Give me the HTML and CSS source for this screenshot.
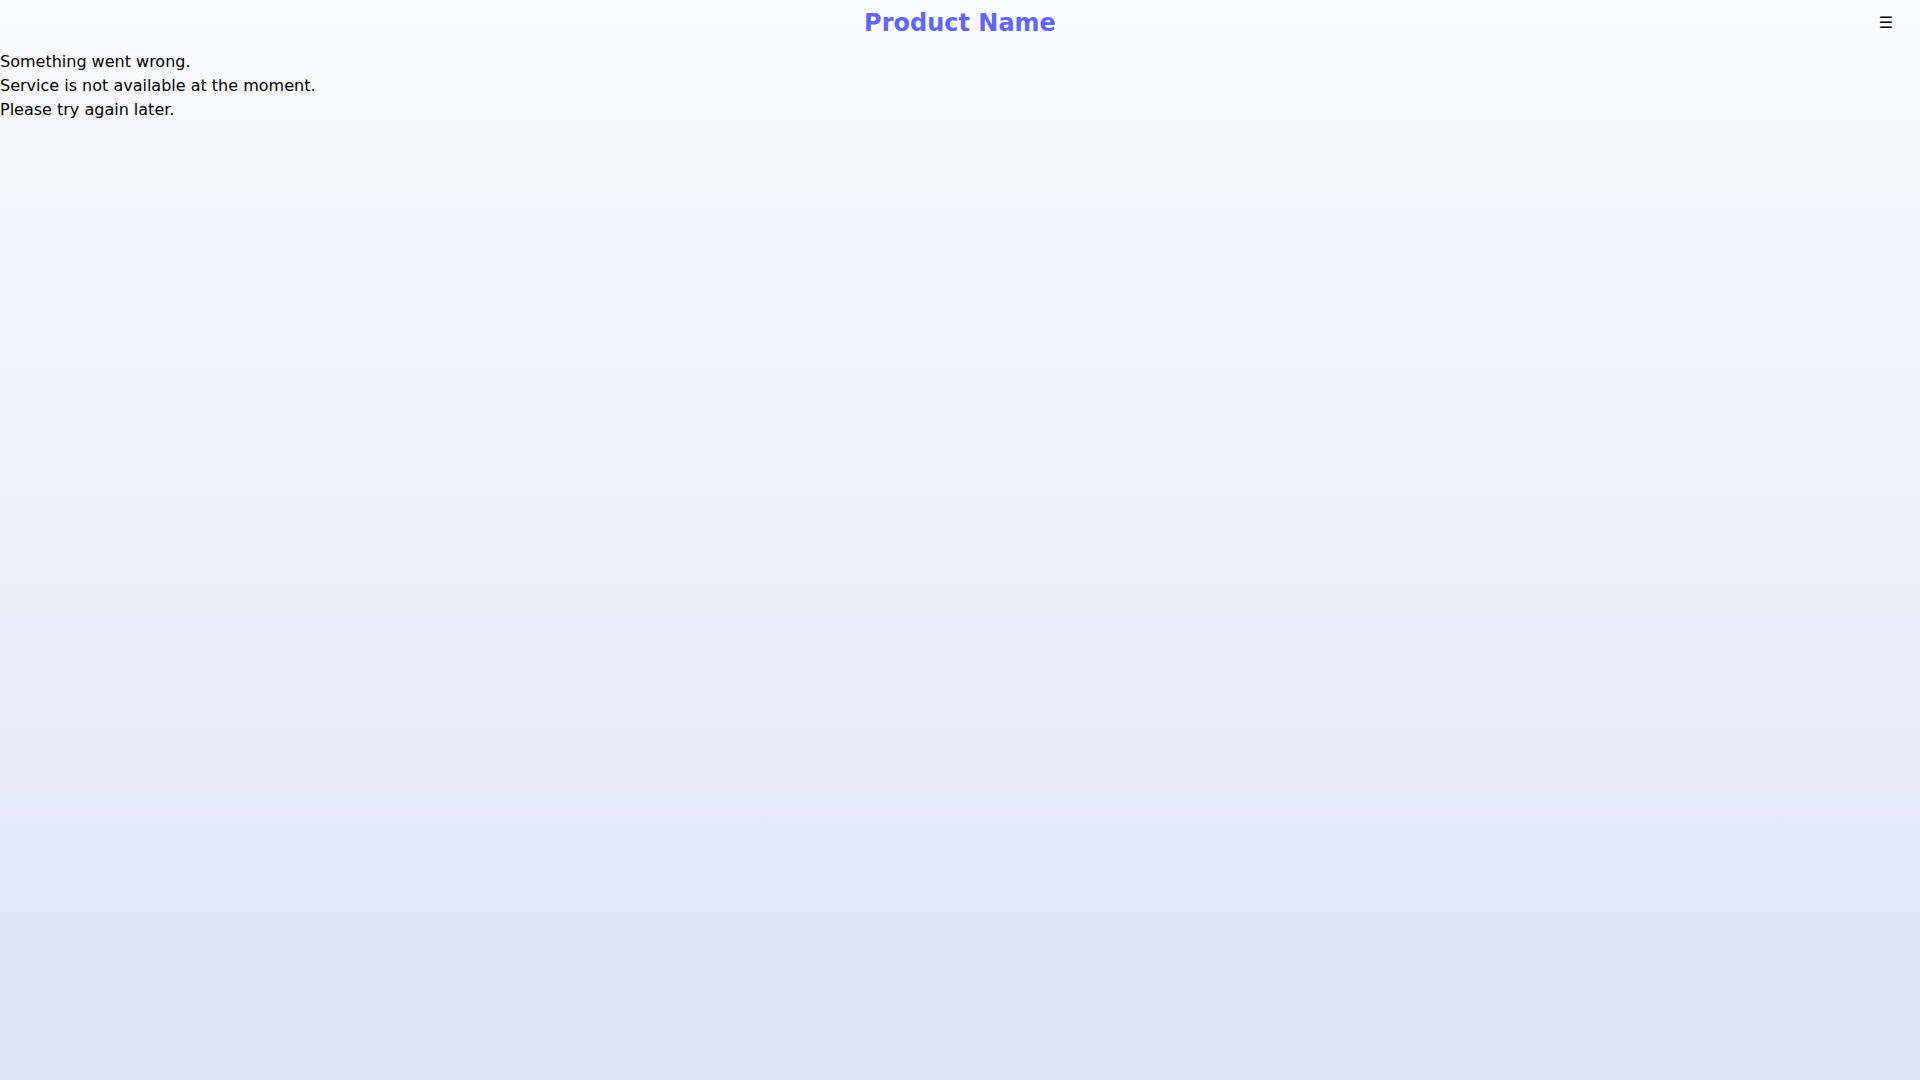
FILE: index.html
```html
<!DOCTYPE html>
<html lang="en">
<head>
<meta charset="utf-8">
<title>Product Name</title>
<link rel="stylesheet" href="styles.css">
</head>
<body>
<div class="page">
  <header class="topbar">
    <div class="spacer"></div>
    <h1 class="brand">Product Name</h1>
    <div class="menu-wrap"><button class="menu" type="button" aria-label="Menu">☰</button></div>
  </header>
  <main class="message">
    <p>Something went wrong.</p>
    <p>Service is not available at the moment.</p>
    <p>Please try again later.</p>
  </main>
</div>
</body>
</html>
```
FILE: styles.css
```css
html, body {
  margin: 0;
  padding: 0;
  height: 100%;
}
body {
  font-family: "DejaVu Sans", sans-serif;
  font-size: 16px;
  line-height: 24px;
  color: #000;
}
.page {
  min-height: 100vh;
  background: linear-gradient(to bottom, #f9fafb 0%, #e0e3f8 100%);
}
.topbar {
  display: flex;
  align-items: center;
  height: 46px;
  padding: 0 16px;
  margin-bottom: 4px;
}
.spacer, .menu-wrap {
  flex: 1;
}
.menu-wrap {
  display: flex;
  justify-content: flex-end;
}
.brand {
  margin: 0;
  font-size: 24px;
  line-height: 28px;
  font-weight: 700;
  color: #6366f1;
}
.menu {
  background: none;
  border: none;
  padding: 0;
  margin-right: 11px;
  font-family: "DejaVu Sans", sans-serif;
  font-size: 16px;
  line-height: 24px;
  color: #000;
  cursor: pointer;
}
.message p {
  margin: 0;
}
```
